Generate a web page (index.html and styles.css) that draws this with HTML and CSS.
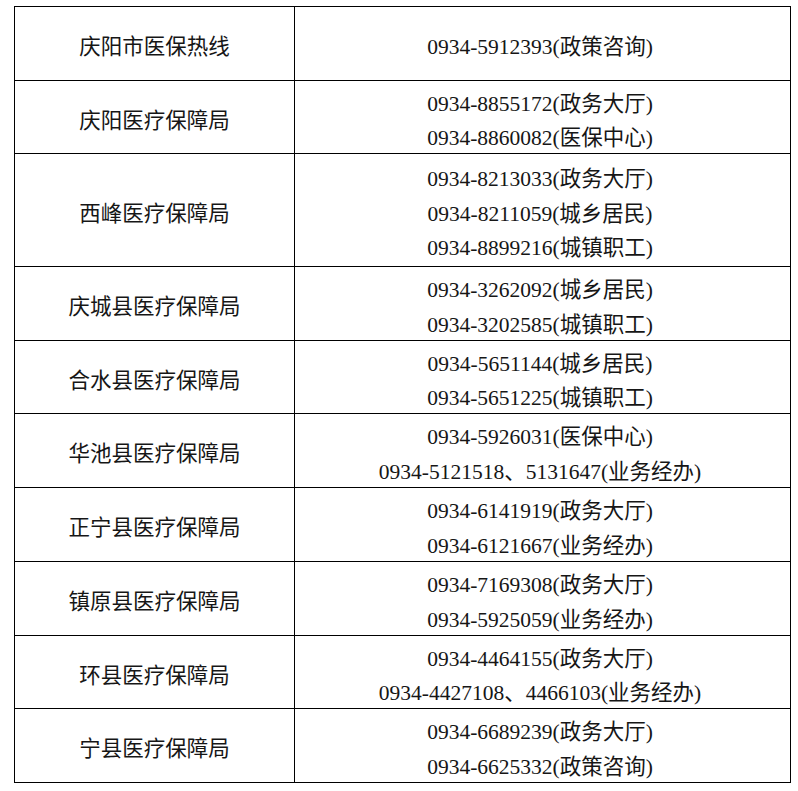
FILE: index.html
```html
<!DOCTYPE html>
<html lang="zh-CN">
<head>
<meta charset="utf-8">
<title>庆阳市医保热线</title>
<link rel="stylesheet" href="styles.css">
</head>
<body>
<table class="hotline">
  <tr>
    <td class="name"><div class="cell">庆阳市医保热线</div></td>
    <td class="phone"><div class="cell"><div>0934-5912393(政策咨询)</div></div></td>
  </tr>
  <tr class="short">
    <td class="name"><div class="cell">庆阳医疗保障局</div></td>
    <td class="phone"><div class="cell"><div>0934-8855172(政务大厅)</div><div>0934-8860082(医保中心)</div></div></td>
  </tr>
  <tr class="tall">
    <td class="name"><div class="cell">西峰医疗保障局</div></td>
    <td class="phone"><div class="cell"><div>0934-8213033(政务大厅)</div><div>0934-8211059(城乡居民)</div><div>0934-8899216(城镇职工)</div></div></td>
  </tr>
  <tr>
    <td class="name"><div class="cell">庆城县医疗保障局</div></td>
    <td class="phone"><div class="cell"><div>0934-3262092(城乡居民)</div><div>0934-3202585(城镇职工)</div></div></td>
  </tr>
  <tr class="short">
    <td class="name"><div class="cell">合水县医疗保障局</div></td>
    <td class="phone"><div class="cell"><div>0934-5651144(城乡居民)</div><div>0934-5651225(城镇职工)</div></div></td>
  </tr>
  <tr>
    <td class="name"><div class="cell">华池县医疗保障局</div></td>
    <td class="phone"><div class="cell"><div>0934-5926031(医保中心)</div><div>0934-5121518、5131647(业务经办)</div></div></td>
  </tr>
  <tr>
    <td class="name"><div class="cell">正宁县医疗保障局</div></td>
    <td class="phone"><div class="cell"><div>0934-6141919(政务大厅)</div><div>0934-6121667(业务经办)</div></div></td>
  </tr>
  <tr>
    <td class="name"><div class="cell">镇原县医疗保障局</div></td>
    <td class="phone"><div class="cell"><div>0934-7169308(政务大厅)</div><div>0934-5925059(业务经办)</div></div></td>
  </tr>
  <tr class="short">
    <td class="name"><div class="cell">环县医疗保障局</div></td>
    <td class="phone"><div class="cell"><div>0934-4464155(政务大厅)</div><div>0934-4427108、4466103(业务经办)</div></div></td>
  </tr>
  <tr>
    <td class="name"><div class="cell">宁县医疗保障局</div></td>
    <td class="phone"><div class="cell"><div>0934-6689239(政务大厅)</div><div>0934-6625332(政策咨询)</div></div></td>
  </tr>
</table>
</body>
</html>
```
FILE: styles.css
```css
html, body {
  margin: 0;
  padding: 0;
  background: #ffffff;
}
body {
  padding: 6px 0 0 14px;
  font-family: "Liberation Serif", "Noto Sans CJK SC", serif;
  font-size: 21.5px;
  color: #161616;
}
.hotline {
  border-collapse: collapse;
  width: 777px;
  table-layout: fixed;
}
.hotline tr {
  height: 74px;
}
.hotline tr.short {
  height: 73px;
}
.hotline tr.tall {
  height: 113px;
}
.hotline td {
  border: 1px solid #000;
  padding: 0;
  line-height: 34.5px;
  text-align: center;
  vertical-align: middle;
  white-space: nowrap;
}
.hotline td.name {
  width: 279px;
}
.hotline td.phone {
  padding-right: 5px;
}
.cell {
  padding-top: 5px;
  margin-bottom: -3px;
}
```
